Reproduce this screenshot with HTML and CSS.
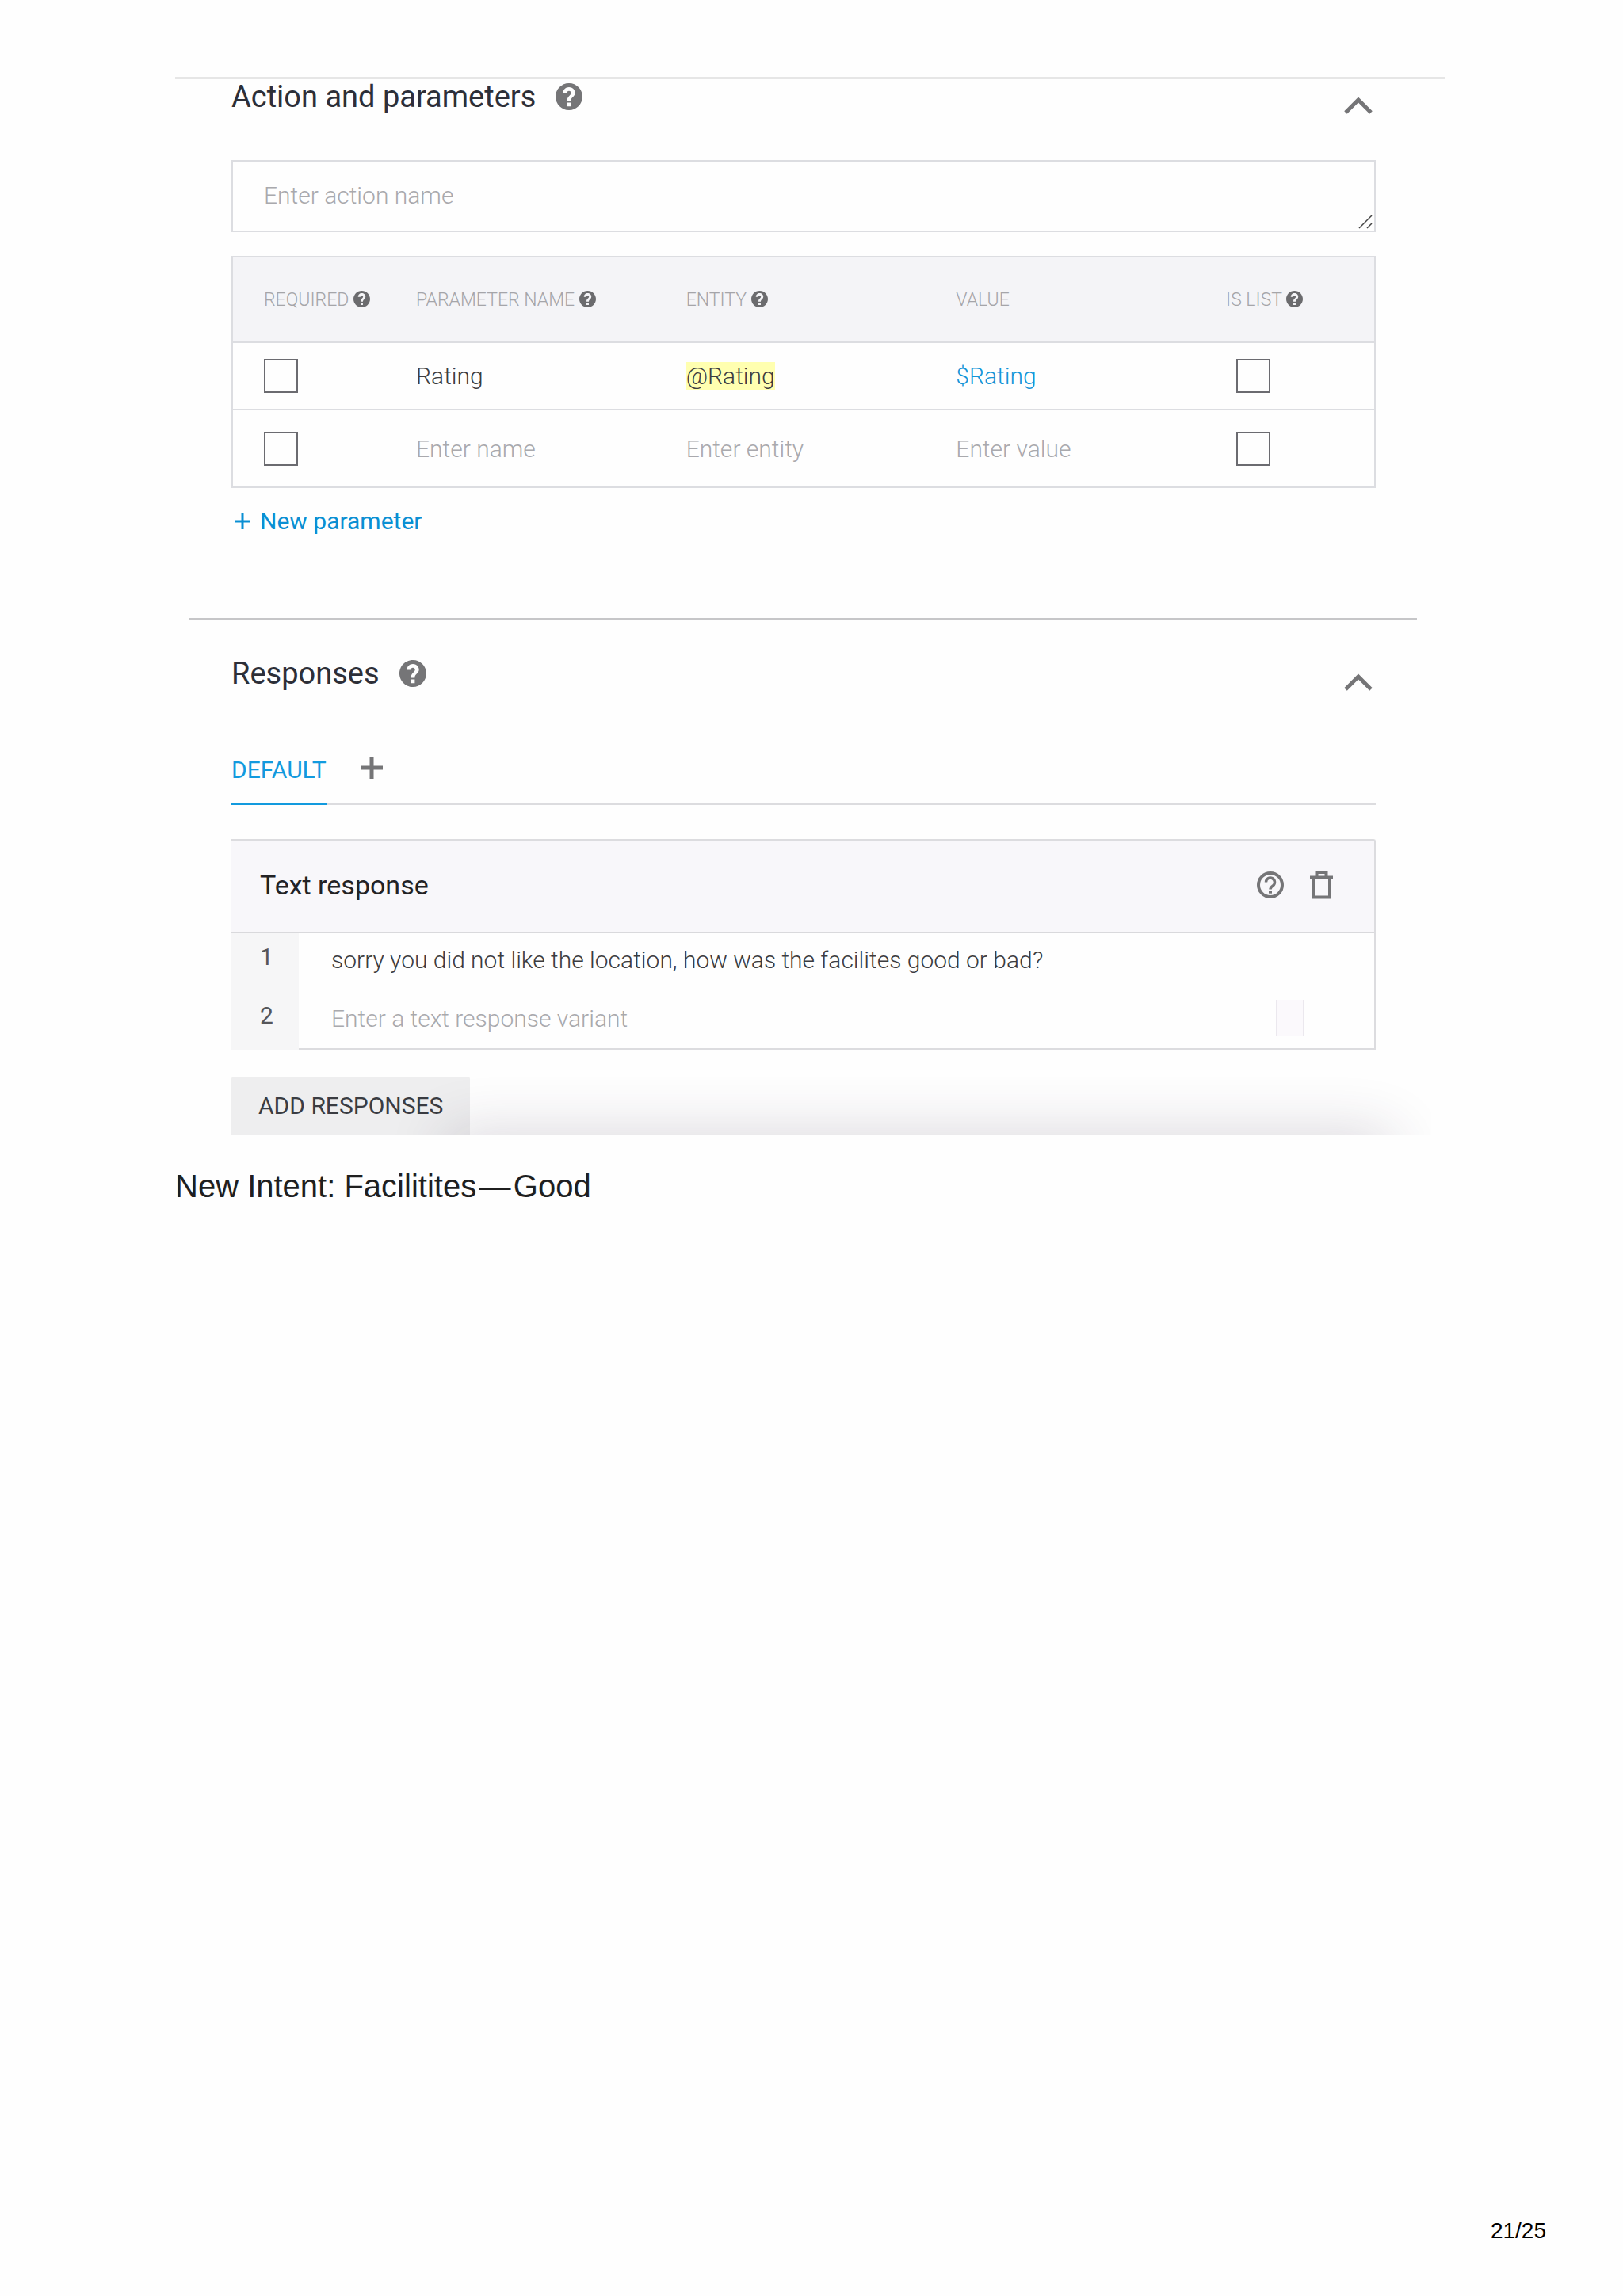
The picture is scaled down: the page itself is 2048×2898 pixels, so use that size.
FILE: index.html
```
<!DOCTYPE html>
<html lang="en">
<head>
    <meta charset="utf-8">
    <title>New Intent</title>
    <link rel="stylesheet" href="styles.css">
</head>
<body>
    <!-- Shared icons -->
    <svg class="sprite" aria-hidden="true">
        <symbol id="icon-help" viewBox="2 2 20 20">
            <path d="M12 2C6.480 2 2 6.480 2 12s4.480 10 10 10 10-4.480 10-10S17.520 2 12 2zm1.400 17.200h-2.800v-2.800h2.800v2.800zm2-7.500l-.9.900c-.8.800-1.100 1.300-1.100 2.600h-2.800v-.6c0-1.100.5-2.100 1.200-2.800l1.200-1.200c.4-.4.6-.8.6-1.400 0-.9-.7-1.500-1.600-1.500s-1.600.7-1.600 1.700H7.500c0-2.500 2-4.500 4.500-4.500s4.500 1.900 4.500 4.300c0 1-.4 1.800-1.100 2.500z"/>
        </symbol>
        <symbol id="icon-up" viewBox="0 0 36 22">
            <path d="M2 20L18 4l16 16" fill="none" stroke="currentColor" stroke-width="5"/>
        </symbol>
    </svg>

    <main class="page">
        <div class="panel">
            <!-- Action and parameters -->
            <section class="section">
                <div class="section-header">
                    <h2 class="section-title">Action and parameters</h2>
                    <svg class="help-icon"><use href="#icon-help"/></svg>
                    <button class="toggle-btn" aria-label="Collapse action and parameters"><svg><use href="#icon-up"/></svg></button>
                </div>

                <div class="action-field">
                    <textarea class="action-input" rows="1" aria-label="Action name" placeholder="Enter action name"></textarea>
                    <svg class="resize-handle" viewBox="0 0 18 18"><path d="M1 17L17 1M11 17l6-6" stroke="#444" stroke-width="1.500"/></svg>
                </div>

                <table class="params">
                    <colgroup>
                        <col class="col-required">
                        <col>
                        <col>
                        <col>
                        <col class="col-list">
                    </colgroup>
                    <thead>
                        <tr>
                            <th>REQUIRED <svg class="help-small"><use href="#icon-help"/></svg></th>
                            <th>PARAMETER NAME <svg class="help-small"><use href="#icon-help"/></svg></th>
                            <th>ENTITY <svg class="help-small"><use href="#icon-help"/></svg></th>
                            <th>VALUE</th>
                            <th>IS LIST <svg class="help-small"><use href="#icon-help"/></svg></th>
                        </tr>
                    </thead>
                    <tbody>
                        <tr class="filled">
                            <td><input type="checkbox" class="check" aria-label="Rating is required"></td>
                            <td><input type="text" class="cell-input" aria-label="Parameter name" value="Rating"></td>
                            <td><mark class="entity">@Rating</mark></td>
                            <td><input type="text" class="cell-input value" aria-label="Value" value="$Rating"></td>
                            <td class="list-cell"><input type="checkbox" class="check" aria-label="Rating is a list"></td>
                        </tr>
                        <tr class="blank">
                            <td><input type="checkbox" class="check" aria-label="Required"></td>
                            <td><input type="text" class="cell-input" aria-label="New parameter name" placeholder="Enter name"></td>
                            <td><input type="text" class="cell-input" aria-label="New parameter entity" placeholder="Enter entity"></td>
                            <td><input type="text" class="cell-input" aria-label="New parameter value" placeholder="Enter value"></td>
                            <td class="list-cell"><input type="checkbox" class="check" aria-label="Is list"></td>
                        </tr>
                    </tbody>
                </table>

                <button class="new-param">
                    <svg viewBox="0 0 20 20"><path d="M10 0v20M0 10h20" stroke="currentColor" stroke-width="3"/></svg>
                    New parameter
                </button>
            </section>

            <hr class="divider">

            <!-- Responses -->
            <section class="section responses">
                <div class="section-header">
                    <h2 class="section-title">Responses</h2>
                    <svg class="help-icon"><use href="#icon-help"/></svg>
                    <button class="toggle-btn" aria-label="Collapse responses"><svg><use href="#icon-up"/></svg></button>
                </div>

                <div class="tabs">
                    <button class="tab">DEFAULT</button>
                    <button class="tab-add" aria-label="Add integration"><svg viewBox="0 0 28 28"><path d="M14 0v28M0 14h28" stroke="currentColor" stroke-width="5"/></svg></button>
                </div>

                <div class="card">
                    <div class="card-header">
                        <h3 class="card-title">Text response</h3>
                        <button class="icon-btn" aria-label="Help">
                            <svg class="icon-outline" viewBox="0 0 34 34">
                                <circle cx="17" cy="17" r="15" fill="none" stroke="currentColor" stroke-width="4"/>
                                <path d="M11.500 13.500a5.500 5.500 0 1 1 8.800 4.400c-2 1.400-3.300 2.300-3.300 4.600" fill="none" stroke="currentColor" stroke-width="3.500"/>
                                <path d="M15 24.200h4v3.500h-4z" fill="currentColor"/>
                            </svg>
                        </button>
                        <button class="icon-btn" aria-label="Delete">
                            <svg class="icon-trash" viewBox="0 0 29 36">
                                <path d="M4 9v24.500h21V9M0 8.500h29M8.500 8V2h12v6" fill="none" stroke="currentColor" stroke-width="4"/>
                            </svg>
                        </button>
                    </div>
                    <div class="card-body">
                        <div class="line-numbers">
                            <span>1</span>
                            <span>2</span>
                        </div>
                        <div class="variants">
                            <input type="text" class="variant" aria-label="Text response 1" value="sorry you did not like the location, how was the facilites good or bad?">
                            <div class="variant-row">
                                <input type="text" class="variant" aria-label="Text response 2" placeholder="Enter a text response variant">
                                <span class="ghost"></span>
                            </div>
                        </div>
                    </div>
                </div>

                <div class="actions">
                    <button class="add-responses">ADD RESPONSES</button>
                </div>
            </section>
        </div>

        <p class="caption">New Intent: Facilitites&#8202;—&#8202;Good</p>

        <footer class="page-number">21/25</footer>
    </main>
</body>
</html>
```
FILE: styles.css
```
* {
    box-sizing: border-box;
}

body {
    margin: 0;
    background: #fefefe;
    color: #1f1f1f;
    font-family: Roboto, "Liberation Sans", sans-serif;
    font-size: 30px;
}

button,
input,
textarea {
    margin: 0;
    padding: 0;
    border: none;
    background: none;
    color: inherit;
    font: inherit;
    outline: none;
}

button {
    cursor: pointer;
}

svg {
    display: block;
    flex: none;
}

::placeholder {
    color: #a9a9ad;
    opacity: 1;
}

.sprite {
    position: absolute;
    width: 0;
    height: 0;
}

.page {
    display: flex;
    flex-direction: column;
    min-height: 100vh;
    padding: 97px 97px 65px 221px;
}

.panel {
    margin-right: 127px;
    border-top: 3px solid #e6e6e6;
}

.section {
    padding: 0 88px 0 71px;
}

.section-header {
    display: flex;
    align-items: center;
    height: 44px;
}

.section-title {
    margin: 0;
    font-size: 38px;
    font-weight: 400;
    line-height: 44px;
    color: #2d2f38;
}

.help-icon {
    width: 34px;
    height: 34px;
    margin-left: 25px;
    fill: #757577;
}

.toggle-btn {
    align-self: flex-end;
    margin-left: auto;
    margin-right: 4px;
    color: #757577;
}

.toggle-btn svg {
    width: 36px;
    height: 22px;
}

.action-field {
    position: relative;
    margin-top: 58px;
}

.action-input {
    display: block;
    width: 100%;
    height: 91px;
    padding: 26px 39px;
    border: 2px solid #dcdde1;
    line-height: 34px;
    font-weight: 300;
    resize: none;
    overflow: hidden;
}

.resize-handle {
    position: absolute;
    right: 4px;
    bottom: 4px;
    width: 18px;
    height: 18px;
}

/* Parameters table */
.params {
    width: 100%;
    margin-top: 30px;
    border: 2px solid #dcdde1;
    border-spacing: 0;
    table-layout: fixed;
}

.col-required {
    width: 192px;
}

.col-list {
    width: 226px;
}

.params th,
.params td {
    padding: 0 0 0 39px;
    text-align: left;
}

.params th {
    height: 108px;
    background: #f4f4f7;
    border-bottom: 2px solid #dcdde1;
    color: #a5a5a9;
    font-size: 23px;
    font-weight: 300;
    white-space: nowrap;
}

.filled td {
    height: 85px;
    border-bottom: 2px solid #dcdde1;
    color: #3c3c40;
    font-weight: 300;
}

.blank td {
    height: 96px;
    font-weight: 300;
}

.params .list-cell {
    padding-left: 52px;
}

.help-small {
    display: inline-block;
    width: 21px;
    height: 21px;
    vertical-align: -2px;
    fill: #6b6b6e;
}

.check {
    appearance: none;
    display: block;
    width: 43px;
    height: 43px;
    border: 2px solid #6b6b70;
}

.cell-input {
    display: block;
    width: 100%;
    height: 36px;
}

.entity {
    background: #ffffb0;
    color: inherit;
}

.filled .value {
    color: #1495d8;
}

.new-param {
    display: flex;
    align-items: center;
    gap: 12px;
    margin: 24px 0 0 4px;
    color: #0a8fd3;
    line-height: 36px;
}

.new-param svg {
    width: 20px;
    height: 20px;
}

.divider {
    height: 3px;
    margin: 104px 36px 0 17px;
    border: none;
    background: #c6c6c8;
}

/* Responses */
.responses {
    padding-top: 45px;
}

.tabs {
    display: flex;
    align-items: flex-start;
    gap: 43px;
    margin-top: 83px;
    border-bottom: 2px solid #dcdcdf;
}

.tab {
    margin-bottom: -2px;
    padding-bottom: 25px;
    border-bottom: 2px solid #129ade;
    color: #129ade;
    line-height: 34px;
}

.tab-add {
    color: #757577;
}

.tab-add svg {
    width: 28px;
    height: 28px;
}

.card {
    margin-top: 43px;
    border-top: 2px solid #dcdcdf;
    border-right: 2px solid #dcdcdf;
    border-top-right-radius: 3px;
}

.card-header {
    display: flex;
    align-items: center;
    height: 117px;
    padding: 0 52px 4px 36px;
    background: #f8f7fa;
    border-bottom: 2px solid #d9d9dc;
    color: #757577;
}

.card-title {
    margin: 0 auto 0 0;
    color: #222225;
    font-size: 34px;
    font-weight: 400;
}

.icon-btn + .icon-btn {
    margin-left: 33px;
}

.icon-outline {
    width: 34px;
    height: 34px;
}

.icon-trash {
    width: 29px;
    height: 36px;
}

.card-body {
    display: flex;
}

.line-numbers {
    display: flex;
    flex-direction: column;
    gap: 14px;
    width: 85px;
    padding-left: 36px;
    background: #f6f6f7;
    color: #56565a;
    line-height: 60px;
}

.variants {
    display: flex;
    flex: 1;
    flex-direction: column;
    gap: 8px;
    padding: 0 88px 5px 41px;
    border-bottom: 2px solid #dcdcdf;
}

.variant {
    width: 100%;
    height: 66px;
    color: #3c3c40;
    font-weight: 300;
}

.variant-row {
    display: flex;
    align-items: center;
}

.ghost {
    flex: none;
    width: 36px;
    height: 46px;
    background: #fbf9fc;
    border-left: 2px solid #ebe8ee;
    border-right: 2px solid #ebe8ee;
}

/* The row is cut off at the bottom, over the edge of a soft shadow */
.actions {
    position: relative;
    height: 107px;
    margin-right: -70px;
    padding-top: 34px;
    overflow: hidden;
}

.actions::after {
    content: "";
    position: absolute;
    top: 100%;
    left: 270px;
    right: 50px;
    height: 60px;
    box-shadow: 0 0 75px rgba(50, 35, 65, 0.2);
    pointer-events: none;
}

.add-responses {
    height: 73px;
    padding: 0 34px;
    background: #eeeeef;
    border-radius: 3px 3px 0 0;
    color: #3a3c42;
}

.caption {
    margin: 42px 0 0;
    font-family: "Liberation Sans", Arial, sans-serif;
    font-size: 40px;
    line-height: 46px;
}

.page-number {
    margin-top: auto;
    color: #000;
    font-family: "Liberation Sans", Arial, sans-serif;
    font-size: 28px;
    line-height: 34px;
    text-align: right;
}
```
